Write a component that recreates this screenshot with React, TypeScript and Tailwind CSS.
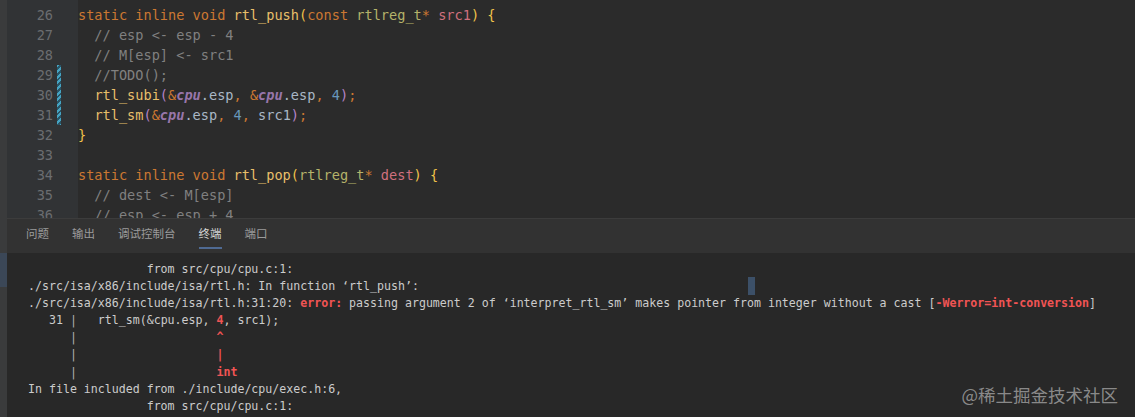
const K = "text-[#cc7832]";
const FN = "text-[#e8bf6a]";
const Y = "text-[#f0c24a]";
const P = "text-[#b583c7]";
const TY = "text-[#b5b36a]";
const PR = "text-[#d0707e]";
const CM = "text-[#808080]";
const TX = "text-[#a9b7c6]";
const NUM = "text-[#6897bb]";
const CPU = "text-[#9876aa] italic font-bold";

type Seg = [string, string];

const code: Seg[][] = [
  [[K, "static inline void "], [FN, "rtl_push"], [Y, "("], [K, "const "], [TY, "rtlreg_t"], [K, "* "], [PR, "src1"], [Y, ")"], [TX, " "], [Y, "{"]],
  [[CM, "  // esp <- esp - 4"]],
  [[CM, "  // M[esp] <- src1"]],
  [[CM, "  //TODO();"]],
  [[TX, "  "], [FN, "rtl_subi"], [P, "("], [K, "&"], [CPU, "cpu"], [TX, ".esp"], [K, ", &"], [CPU, "cpu"], [TX, ".esp"], [K, ", "], [NUM, "4"], [P, ")"], [K, ";"]],
  [[TX, "  "], [FN, "rtl_sm"], [P, "("], [K, "&"], [CPU, "cpu"], [TX, ".esp"], [K, ", "], [NUM, "4"], [K, ", "], [TX, "src1"], [P, ")"], [K, ";"]],
  [[Y, "}"]],
  [[TX, ""]],
  [[K, "static inline void "], [FN, "rtl_pop"], [Y, "("], [TY, "rtlreg_t"], [K, "* "], [PR, "dest"], [Y, ")"], [TX, " "], [Y, "{"]],
  [[CM, "  // dest <- M[esp]"]],
  [[CM, "  // esp <- esp + 4"]],
];

const W = "text-[#cccccc]";
const R = "text-[#f05454] font-bold";
const G = "text-[#b0b0b0]";

const term: Seg[][] = [
  [[W, "                 from src/cpu/cpu.c:1:"]],
  [[W, "./src/isa/x86/include/isa/rtl.h: In function \u2018rtl_push\u2019:"]],
  [[W, "./src/isa/x86/include/isa/rtl.h:31:20: "], [R, "error: "], [W, "passing argument 2 of \u2018interpret_rtl_sm\u2019 makes pointer from integer without a cast ["], [R, "-Werror=int-conversion"], [W, "]"]],
  [[W, "   31 "], [G, "|"], [W, "   rtl_sm(&cpu.esp, "], [R, "4"], [W, ", src1);"]],
  [[W, "      "], [G, "|"], [W, "                    "], [R, "^"]],
  [[W, "      "], [G, "|"], [W, "                    "], [R, "|"]],
  [[W, "      "], [G, "|"], [W, "                    "], [R, "int"]],
  [[W, "In file included from ./include/cpu/exec.h:6,"]],
  [[W, "                 from src/cpu/cpu.c:1:"]],
];

const tabs = ["问题", "输出", "调试控制台", "终端", "端口"];

export default function App() {
  return (
    <div className="relative flex h-[417px] w-[1135px] overflow-hidden bg-[#3a3b3c]">
      {/* left tool strip */}
      <div className="flex w-[7px] flex-col">
        <div className="h-[253px]" />
        <div className="h-[34px] bg-[#3b4757]" />
      </div>

      <div className="flex flex-1 flex-col">
        {/* editor */}
        <div className="flex h-[218px] overflow-hidden font-['DejaVu_Sans_Mono',monospace] text-[13.6px] leading-[20px]">
          <div className="flex w-[71px] bg-[#313335] pt-[5px]">
            <div className="w-[46px] text-right text-[#6b6d70]">
              {code.map((_, i) => (
                <div key={i} className="h-[20px]">{26 + i}</div>
              ))}
            </div>
            <div className="ml-[4px] flex flex-col">
              <div className="h-[60px]" />
              <div className="h-[60px] w-[4px] bg-[repeating-linear-gradient(135deg,#45a3c2_0_2px,#2a5566_2px_4px)]" />
            </div>
          </div>
          <div className="flex-1 bg-[#2b2b2b] pt-[5px] whitespace-pre">
            {code.map((line, i) => (
              <div key={i} className="h-[20px]">
                {line.map(([c, t], j) => (
                  <span key={j} className={c}>{t}</span>
                ))}
              </div>
            ))}
          </div>
        </div>

        {/* bottom panel */}
        <div className="flex flex-1 flex-col border-t border-[#3c3c3c]">
          <div className="flex h-[34px] items-stretch gap-[23px] bg-[#323232] pl-[19px] font-['Noto_Sans_CJK_SC',sans-serif] text-[11.5px]">
            {tabs.map((t) => (
              <div key={t} className="flex flex-col justify-center pt-[2px]">
                <span className={t === "终端" ? "text-[#d4d4d4]" : "text-[#9b9b9b]"}>{t}</span>
                <div className={t === "终端" ? "mt-[5px] h-[2px] bg-[#4f6a93]" : "mt-[5px] h-[2px]"} />
              </div>
            ))}
          </div>
          <div className="relative flex-1 bg-[#282828] pl-[21px] pt-[8px] font-['DejaVu_Sans_Mono',monospace] text-[11.6px] leading-[17.1px] whitespace-pre">
            {term.map((line, i) => (
              <div key={i} className="h-[17.1px]">
                {line.map(([c, t], j) => (
                  <span key={j} className={c}>{t}</span>
                ))}
              </div>
            ))}
            <div className="absolute left-[741px] top-[24px] h-[18px] w-[7px] bg-[#3c5068]" />
          </div>
        </div>
      </div>

      <div className="absolute bottom-[14px] right-[17px] font-['Noto_Sans_CJK_SC',sans-serif] text-[17.5px] leading-none text-[#a5a5a5]/80">
        @稀土掘金技术社区
      </div>
    </div>
  );
}
